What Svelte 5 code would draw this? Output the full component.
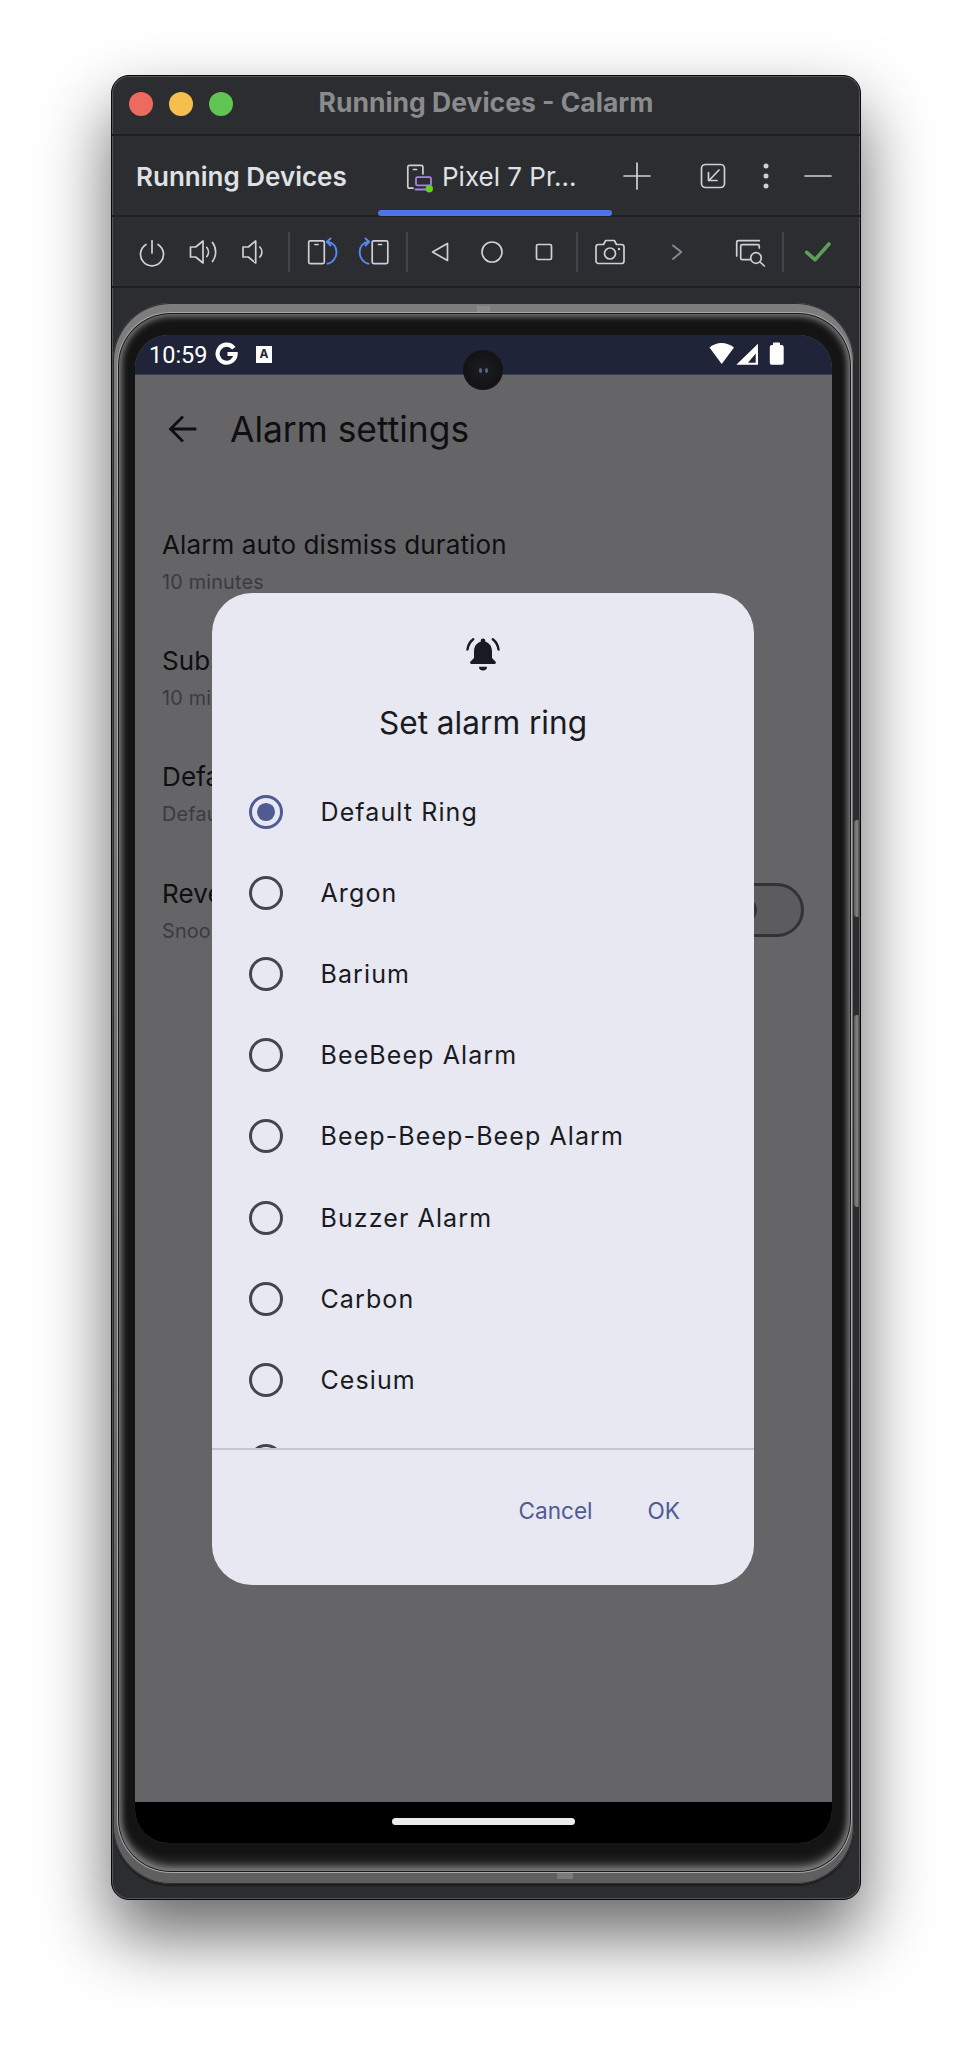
<script>
  const rings = ['Default Ring','Argon','Barium','BeeBeep Alarm','Beep-Beep-Beep Alarm','Buzzer Alarm','Carbon','Cesium',''];
  const settings = [
    { t: 'Alarm auto dismiss duration', s: '10 minutes' },
    { t: 'Subsequent alarm duration', s: '10 minutes' },
    { t: 'Default alarm ring', s: 'Default Ring' },
    { t: 'Reverse snooze', s: 'Snooze button swapped' }
  ];
</script>

<div class="page">
  <div class="window">
    <header class="titlebar">
      <span class="light red"></span><span class="light yellow"></span><span class="light green"></span>
      <h1>Running Devices - Calarm</h1>
    </header>

    <div class="tabs">
      <span class="tool-title">Running Devices</span>
      <div class="tab">
        <svg class="ic" viewBox="0 0 40 40">
          <path class="st" d="M12 31.2H8.5a1.7 1.7 0 0 1-1.7-1.7V10a1.7 1.7 0 0 1 1.7-1.7h11.7a1.7 1.7 0 0 1 1.7 1.7v7M12.5 12.5h3"/>
          <rect class="pu" x="15" y="20.2" width="15" height="8.2" rx="1.5"/>
          <path class="pu" d="M14.500 32.500h11"/>
          <circle class="dot" cx="28.300" cy="31.700" r="3.700"/>
        </svg>
        <span class="tab-label">Pixel 7 Pr...</span>
      </div>
      <svg class="ic plus" viewBox="0 0 40 40"><path class="st" d="M20 7v26M7 20h26"/></svg>
      <svg class="ic restore" viewBox="0 0 40 40">
        <rect class="st" x="8.500" y="8.500" width="23" height="23" rx="4"/>
        <path class="st" d="M26 14L16 24.500M15.500 16.500v8h8.500"/>
      </svg>
      <svg class="ic kebab" viewBox="0 0 40 40">
        <circle class="fl" cx="20" cy="10" r="2.500"/><circle class="fl" cx="20" cy="20" r="2.500"/><circle class="fl" cx="20" cy="30" r="2.500"/>
      </svg>
      <svg class="ic minus" viewBox="0 0 40 40"><path class="st" d="M7 20h26"/></svg>
    </div>

    <div class="toolbar">
      <svg class="ic" viewBox="0 0 40 40"><path class="st" d="M20 8.500v12.500M14 12.500a11.500 11.500 0 1 0 12 0"/></svg>
      <svg class="ic" viewBox="0 0 40 40"><path class="st" d="M7.500 15h5.200L20 9v22l-7.300-6H7.500zM23.800 15.500a7 7 0 0 1 0 9M29.500 10.500a16 16 0 0 1 0 19"/></svg>
      <svg class="ic" viewBox="0 0 40 40"><path class="st" d="M10 15h5.300L22.700 9v22l-7.400-6H10zM26.800 15a7 7 0 0 1 0 10"/></svg>
      <span class="sep"></span>
      <svg class="ic" viewBox="0 0 40 40">
        <rect class="st" x="6.700" y="8.800" width="15.600" height="22.800" rx="1.500"/><path class="st" d="M13 12.500h3"/>
        <path class="bl" d="M25.500 9.800c5.500.8 9 4.800 9 10.200s-3.500 10.800-9 11.700M28.500 6.500l-3.700 3.300 3.700 3.700"/>
      </svg>
      <svg class="ic" viewBox="0 0 40 40">
        <rect class="st" x="18.200" y="8.800" width="15.600" height="22.800" rx="1.500"/><path class="st" d="M24.500 12.500h3"/>
        <path class="bl" d="M14.500 9.800c-5.500.8-8.800 4.800-8.800 10.200s3.300 10.800 8.800 11.700M11.500 6.500l3.700 3.300-3.700 3.700"/>
      </svg>
      <span class="sep"></span>
      <svg class="ic" viewBox="0 0 40 40"><path class="st" d="M12.500 20L27.500 11.500v17z"/></svg>
      <svg class="ic" viewBox="0 0 40 40"><circle class="st" cx="20" cy="20" r="10"/></svg>
      <svg class="ic" viewBox="0 0 40 40"><rect class="st" x="12.500" y="12.500" width="15" height="15" rx="1.500"/></svg>
      <span class="sep"></span>
      <svg class="ic" viewBox="0 0 40 40">
        <path class="st" d="M8.500 12.500h5l2.200-4h8.600l2.200 4h5a2.500 2.500 0 0 1 2.500 2.500v14a2.500 2.500 0 0 1-2.500 2.500h-23A2.500 2.500 0 0 1 6 29V15a2.500 2.500 0 0 1 2.500-2.500z"/>
        <circle class="st" cx="20" cy="21.500" r="5.500"/><circle class="fl" cx="29" cy="17" r="1.200"/>
      </svg>
      <svg class="ic" viewBox="0 0 40 40"><path class="gr" d="M16 13.500L24.300 20 16 27"/></svg>
      <svg class="ic search" viewBox="0 0 40 40">
        <path class="st" d="M6.700 24V10.200a1.500 1.500 0 0 1 1.500-1.500h21.100M29.300 16v-1.800a1.500 1.500 0 0 0-1.500-1.500H12.200a1.500 1.500 0 0 0-1.500 1.500v12a1.500 1.500 0 0 0 1.500 1.500H20"/>
        <circle class="st" cx="26" cy="26" r="5.300"/><path class="st" d="M30 30l4.300 4"/>
      </svg>
      <span class="sep"></span>
      <svg class="ic" viewBox="0 0 40 40"><path class="ok" d="M8.700 20.300l8.300 7.400L31 12"/></svg>
    </div>

    <div class="stage">
      <div class="phone">
        <span class="nub nub-top"></span>
        <span class="nub nub-bottom"></span>
        <span class="key key-a"></span>
        <span class="key key-b"></span>
        <div class="bezel">
          <div class="screen">
            <div class="status">
              <span class="time">10:59</span>
              <svg class="g" viewBox="0 0 24 24"><path d="M18.800 6.300A9 9 0 1 0 20.600 12H12.500"/></svg>
              <span class="abadge">A</span>
              <svg class="sys" viewBox="0 0 76 24">
                <path d="M0.500 5.500C4 2.500 8 1 12.500 1S21 2.500 25 5.500L12.700 22z"/>
                <path fill-rule="evenodd" d="M27.300 22.700L49 1.700v21zM39 20.700h7.700v-9.200z"/>
                <path d="M64 3v-1.500a1 1 0 0 1 1-1h5a1 1 0 0 1 1 1V3h1.700a2 2 0 0 1 2 2v16a1.700 1.700 0 0 1-1.700 1.700H62.500A1.700 1.700 0 0 1 60.800 21V5a2 2 0 0 1 2-2z"/>
              </svg>
            </div>

            <div class="content">
              <div class="appbar">
                <svg class="ic back" viewBox="0 0 40 40"><path d="M33.300 20H8M20 7.500L7.500 20 20 32.500"/></svg>
                <h2>Alarm settings</h2>
              </div>
              {#each settings as row, i}
                <div class="row">
                  <div>
                    <div class="row-title">{row.t}</div>
                    <div class="row-sub">{row.s}</div>
                  </div>
                  {#if i === 3}
                    <span class="switch"><span class="thumb"></span></span>
                  {/if}
                </div>
              {/each}
            </div>

            <div class="navbar"><span class="home"></span></div>

            <span class="camera"><span class="lens"></span><span class="lens"></span></span>

            <div class="dialog">
              <div class="dialog-head">
                <svg class="ic bell" viewBox="0 0 40 40">
                  <path class="bell-body" d="M20 5.500a2.300 2.300 0 0 1 2.300 2.300v.9c4.600 1.200 6.700 5.200 6.700 9.800v6.500l3.500 3.500c.9.900.3 2.500-1 2.500H8.500c-1.300 0-1.900-1.600-1-2.500l3.500-3.500v-6.500c0-4.600 2.100-8.600 6.700-9.800v-.9A2.300 2.300 0 0 1 20 5.500zM16 33.800h8a4 3.800 0 0 1-8 0z"/>
                  <path class="bell-arc" d="M4.500 16.500c.4-4 2.200-7.500 5.700-10.300M35.500 16.500c-.4-4-2.200-7.500-5.700-10.300"/>
                </svg>
                <h3>Set alarm ring</h3>
              </div>
              <div class="list">
                {#each rings as ring, i}
                  <div class="ring">
                    <span class="radio" class:on={i === 0}></span>
                    {#if ring}<span class="ring-label">{ring}</span>{/if}
                  </div>
                {/each}
              </div>
              <div class="actions">
                <span>Cancel</span>
                <span>OK</span>
              </div>
            </div>
          </div>
        </div>
      </div>
    </div>
  </div>
</div>

<style>
  :global(body) { margin: 0; background: #fff; }
  .page {
    box-sizing: border-box;
    height: 2048px;
    padding: 75px 0 0 111px;
    overflow: hidden;
    font-family: Inter, "Liberation Sans", sans-serif;
  }
  .window {
    box-sizing: border-box;
    width: 750px;
    height: 1825px;
    display: flex;
    flex-direction: column;
    background: #2b2d30;
    border: 1px solid #08080a;
    border-radius: 18px;
    box-shadow: inset 0 0 0 1px #55565a, 0 35px 70px rgba(0, 0, 0, 0.6);
    overflow: hidden;
  }
  .titlebar {
    position: relative;
    box-sizing: border-box;
    height: 60px;
    flex: none;
    display: flex;
    align-items: center;
    gap: 16px;
    padding-left: 17px;
    border-bottom: 2px solid #1e1f22;
  }
  .light { width: 24px; height: 24px; border-radius: 50%; flex: none; margin-top: -2px; }
  .red { background: #ec6a5e; }
  .yellow { background: #f4bf4f; }
  .green { background: #61c554; }
  h1 {
    position: absolute;
    left: 0;
    right: 0;
    top: 11px;
    margin: 0;
    text-align: center;
    font-size: 26.5px;
    line-height: 30px;
    font-weight: 700;
    color: #8a8b8d;
  }
  .ic { width: 40px; height: 40px; display: block; flex: none; overflow: visible; }
  .st { fill: none; stroke: #ced0d6; stroke-width: 1.7; stroke-linecap: round; stroke-linejoin: round; }
  .fl { fill: #ced0d6; }
  .pu { fill: none; stroke: #a582ea; stroke-width: 1.8; stroke-linecap: round; }
  .dot { fill: #5fd423; }
  .bl { fill: none; stroke: #548af7; stroke-width: 1.9; stroke-linecap: round; stroke-linejoin: round; }
  .gr { fill: none; stroke: #868a91; stroke-width: 1.9; stroke-linecap: round; stroke-linejoin: round; }
  .ok { fill: none; stroke: #5f9e5a; stroke-width: 3.600; stroke-linecap: round; stroke-linejoin: round; }

  .tabs {
    box-sizing: border-box;
    height: 81px;
    flex: none;
    display: flex;
    align-items: center;
    padding-left: 24px;
    border-bottom: 2px solid #1e1f22;
  }
  .tool-title {
    width: 218px;
    font-size: 26px;
    font-weight: 600;
    color: #dfe1e5;
    white-space: nowrap;
    margin-top: 2px;
  }
  .tab {
    position: relative;
    box-sizing: border-box;
    width: 234px;
    height: 79px;
    margin-left: 24px;
    padding-left: 23px;
    display: flex;
    align-items: center;
    gap: 1px;
  }
  .tab::after {
    content: "";
    position: absolute;
    left: 0;
    right: 0;
    bottom: -1px;
    height: 6px;
    border-radius: 3px;
    background: #4f72e6;
  }
  .tab-label { font-size: 26px; color: #dfe1e5; white-space: nowrap; margin-top: 2px; }
  .tab .ic { margin-top: 3px; }
  .plus { margin-left: 5px; }
  .restore { margin-left: 36px; margin-top: 1px; }
  .kebab { margin-left: 13px; margin-top: 1px; }
  .minus { margin-left: 12px; margin-top: 1px; }

  .toolbar {
    box-sizing: border-box;
    height: 71px;
    flex: none;
    display: grid;
    grid-template-columns: 52px 50px 50px 22px 44px 60px 6px 60px 44px 60px 6px 60px 74px 66px 6px 64px;
    align-items: center;
    justify-items: center;
    padding-left: 14px;
    border-bottom: 2px solid #1e1f22;
  }
  .sep { width: 2px; height: 40px; background: #43454a; }
  .search { transform: translateX(3px); }

  .stage { flex: 1; padding: 15px 0 0 1px; }
  .phone {
    position: relative;
    box-sizing: border-box;
    width: 741px;
    height: 1581px;
    padding: 11px 4px 13px 6px;
    border-radius: 58px;
    background: linear-gradient(#7d7d7d, #5f5f5f);
    box-shadow: 0 2px 1px #1c1c1e, inset 0 0 0 1px #2e2e30;
  }
  .bezel {
    box-sizing: border-box;
    height: 100%;
    padding: 21px 18px 28px 16px;
    border-radius: 52px;
    background: #141414;
    box-shadow: 0 0 0 1px #1b1b1c, 0 0 0 2px #a8a8a8, inset 0 0 7px 2px #8a8a8a, inset 0 -10px 12px -4px #5e5e5e;
  }
  .nub { position: absolute; background: #8b8b8b; height: 6px; }
  .nub-top { left: 364px; top: 3px; width: 13px; }
  .nub-bottom { left: 444px; bottom: 5px; width: 16px; background: #7a7a7a; }
  .key { position: absolute; right: -6px; width: 6px; background: linear-gradient(90deg, #5e5e5e, #848484, #3c3c3c); border-radius: 3px; }
  .key-a { top: 517px; height: 97px; }
  .key-b { top: 712px; height: 192px; }

  .screen {
    position: relative;
    height: 100%;
    display: flex;
    flex-direction: column;
    border-radius: 33px;
    overflow: hidden;
    background: #656567;
  }
  .status {
    box-sizing: border-box;
    height: 40px;
    flex: none;
    display: flex;
    align-items: center;
    padding: 0 47px 0 14px;
    background: #1f2438;
    border-bottom: 1px solid #393c4c;
  }
  .time { font-family: Roboto, sans-serif; font-size: 23.5px; color: #fff; width: 60px; margin-top: 0; }
  .g { width: 24px; height: 24px; margin-left: 6px; margin-top: -1px; }
  .g path { fill: none; stroke: #fff; stroke-width: 4.200; }
  .abadge {
    width: 16px;
    height: 17px;
    margin-left: 17px;
    margin-top: -1px;
    background: #fff;
    color: #1f2438;
    font-size: 12px;
    font-weight: 700;
    line-height: 15px;
    text-align: center;
  }
  .sys { width: 76px; height: 24px; margin-left: auto; margin-right: 0; margin-top: -1px; fill: #fff; }

  .content { flex: 1; color: #0f0f11; }
  .appbar { height: 108px; display: flex; align-items: center; padding-left: 28px; }
  .back path { fill: none; stroke: #0f0f11; stroke-width: 2.800; }
  h2 { margin: 0 0 0 27px; font-size: 35.4px; font-weight: 400; }
  .row {
    box-sizing: border-box;
    height: 116.2px;
    padding: 46px 28px 0 27px;
    display: flex;
    justify-content: space-between;
    align-items: flex-start;
  }
  .row-title { font-size: 26px; line-height: 32px; letter-spacing: 0.12px; white-space: nowrap; }
  .row-sub { font-size: 19.8px; line-height: 26px; margin-top: 8px; color: #3a3b3e; white-space: nowrap; letter-spacing: 0.2px; }
  .switch {
    box-sizing: border-box;
    position: relative;
    width: 86px;
    height: 54px;
    margin-top: 5px;
    border: 3.500px solid #333336;
    border-radius: 27px;
    background: #5c5c5e;
  }
  .thumb {
    position: absolute;
    left: 12px;
    top: 12px;
    width: 24px;
    height: 24px;
    border-radius: 50%;
    background: #333336;
  }
  .navbar {
    height: 41px;
    flex: none;
    display: flex;
    justify-content: center;
    align-items: center;
    background: #000;
  }
  .home { width: 183px; height: 7px; border-radius: 4px; background: #ececec; margin-top: -2px; }

  .camera {
    position: absolute;
    left: 328px;
    top: 15px;
    width: 40px;
    height: 40px;
    border-radius: 50%;
    background: radial-gradient(circle, #1c1d20 0, #141416 60%);
    display: flex;
    align-items: center;
    justify-content: center;
    gap: 3px;
  }
  .lens { width: 3px; height: 5px; border-radius: 50%; background: #57648a; }

  .dialog {
    position: absolute;
    left: 77px;
    top: 258px;
    width: 542px;
    height: 992px;
    display: flex;
    flex-direction: column;
    background: #e8e8f2;
    border-radius: 40px;
    overflow: hidden;
    color: #1a1b20;
  }
  .dialog-head {
    height: 178px;
    flex: none;
    box-sizing: border-box;
    padding-top: 40px;
    display: flex;
    flex-direction: column;
    align-items: center;
  }
  .bell-body { fill: #1a1b20; }
  .bell-arc { fill: none; stroke: #1a1b20; stroke-width: 2.400; stroke-linecap: round; }
  h3 { margin: 30px 0 0; font-size: 31.6px; line-height: 40px; font-weight: 400; }
  .list { flex: 1; overflow: hidden; }
  .ring {
    height: 81.200px;
    display: flex;
    align-items: center;
    gap: 37.500px;
    padding-left: 37px;
  }
  .radio {
    box-sizing: border-box;
    position: relative;
    width: 34px;
    height: 34px;
    flex: none;
    border: 3.400px solid #44464f;
    border-radius: 50%;
  }
  .radio.on { border-color: #4f5b92; }
  .radio.on::after {
    content: "";
    position: absolute;
    inset: 5.100px;
    border-radius: 50%;
    background: #4f5b92;
  }
  .ring-label { font-size: 25px; letter-spacing: 1.100px; white-space: nowrap; }
  .actions {
    box-sizing: border-box;
    height: 137px;
    flex: none;
    display: flex;
    justify-content: flex-end;
    gap: 55px;
    padding: 45px 74px 0 0;
    border-top: 2px solid #c6c6d0;
    font-size: 22.6px;
    line-height: 32px;
    color: #4f5b92;
  }
</style>
